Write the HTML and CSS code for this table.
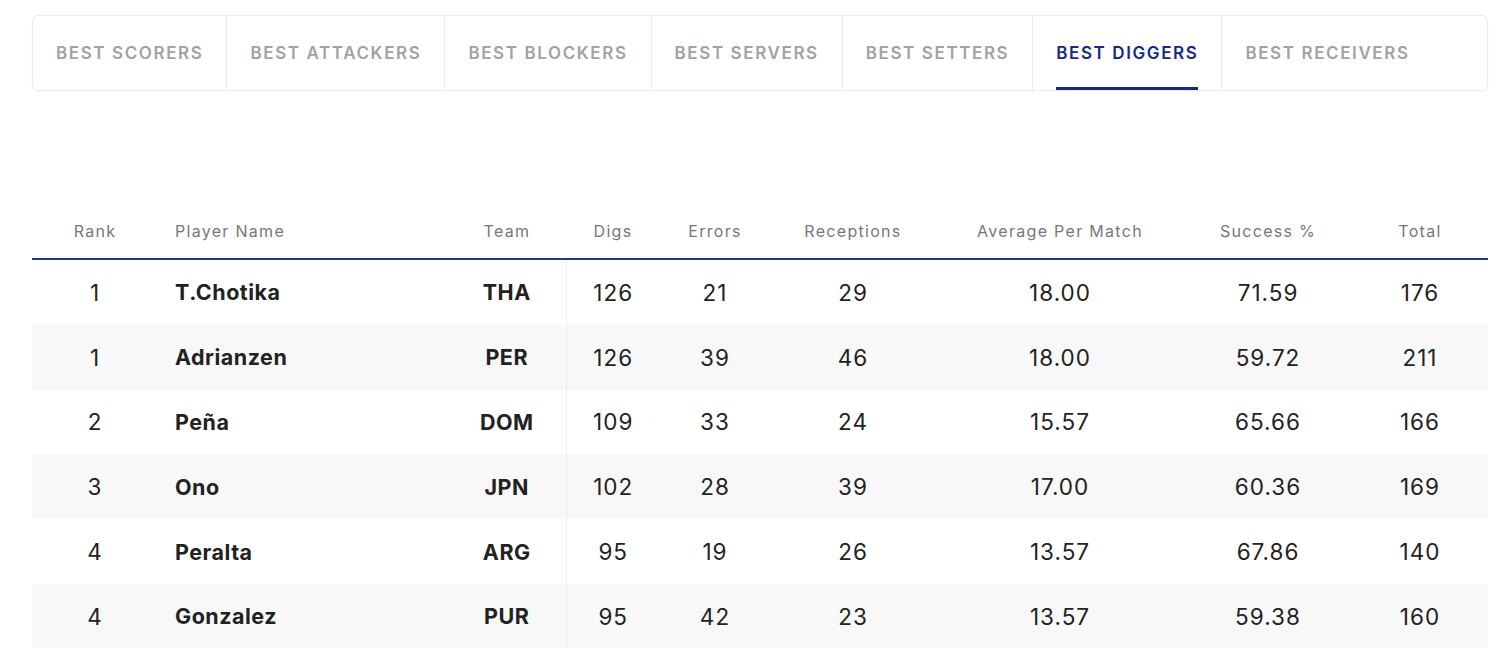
FILE: index.html
```html
<!DOCTYPE html>
<html lang="en">
<head>
<meta charset="utf-8">
<title>Best Diggers</title>
<link rel="stylesheet" href="styles.css">
</head>
<body>
<div class="page">
  <nav class="tabs">
    <div class="tab"><span class="tab-label">BEST SCORERS</span></div>
    <div class="tab"><span class="tab-label">BEST ATTACKERS</span></div>
    <div class="tab"><span class="tab-label">BEST BLOCKERS</span></div>
    <div class="tab"><span class="tab-label">BEST SERVERS</span></div>
    <div class="tab"><span class="tab-label">BEST SETTERS</span></div>
    <div class="tab active"><span class="tab-label">BEST DIGGERS</span></div>
    <div class="tab last"><span class="tab-label">BEST RECEIVERS</span></div>
  </nav>

  <table class="stats">
    <colgroup>
      <col class="c-rank"><col class="c-name"><col class="c-team"><col class="c-digs"><col class="c-err"><col class="c-rec"><col class="c-avg"><col class="c-succ"><col class="c-total">
    </colgroup>
    <thead>
      <tr>
        <th>Rank</th>
        <th class="name">Player Name</th>
        <th>Team</th>
        <th>Digs</th>
        <th>Errors</th>
        <th>Receptions</th>
        <th>Average Per Match</th>
        <th>Success %</th>
        <th>Total</th>
      </tr>
    </thead>
    <tbody>
      <tr><td>1</td><td class="name">T.Chotika</td><td class="team">THA</td><td>126</td><td>21</td><td>29</td><td>18.00</td><td>71.59</td><td>176</td></tr>
      <tr><td>1</td><td class="name">Adrianzen</td><td class="team">PER</td><td>126</td><td>39</td><td>46</td><td>18.00</td><td>59.72</td><td>211</td></tr>
      <tr><td>2</td><td class="name">Peña</td><td class="team">DOM</td><td>109</td><td>33</td><td>24</td><td>15.57</td><td>65.66</td><td>166</td></tr>
      <tr><td>3</td><td class="name">Ono</td><td class="team">JPN</td><td>102</td><td>28</td><td>39</td><td>17.00</td><td>60.36</td><td>169</td></tr>
      <tr><td>4</td><td class="name">Peralta</td><td class="team">ARG</td><td>95</td><td>19</td><td>26</td><td>13.57</td><td>67.86</td><td>140</td></tr>
      <tr><td>4</td><td class="name">Gonzalez</td><td class="team">PUR</td><td>95</td><td>42</td><td>23</td><td>13.57</td><td>59.38</td><td>160</td></tr>
    </tbody>
  </table>
</div>
</body>
</html>
```

FILE: styles.css
```css
html, body {
  margin: 0;
  padding: 0;
  background: #ffffff;
}

body {
  font-family: Inter, "Noto Sans", "Liberation Sans", sans-serif;
  color: #222222;
  overflow: hidden;
}

.page {
  width: 1456px;
  margin-left: 32px;
  padding-top: 15px;
}

.tabs {
  display: flex;
  height: 76px;
  border: 1px solid #ececec;
  border-radius: 6px;
  box-sizing: border-box;
  box-shadow: 0 1px 3px rgba(0, 0, 0, 0.03);
}

.tab {
  display: flex;
  align-items: stretch;
  justify-content: center;
  padding: 0 23px;
  border-right: 1px solid #ececec;
}

.tab.last {
  border-right: none;
}

.tab-label {
  display: flex;
  align-items: center;
  font-size: 17px;
  font-weight: 600;
  letter-spacing: 1.6px;
  color: #a2a2a2;
  border-bottom: 3px solid transparent;
  padding-top: 3px;
  white-space: nowrap;
}

.tab.active .tab-label {
  color: #14298a;
  border-bottom-color: #14298a;
}

.stats {
  margin-top: 112px;
  width: 1456px;
  border-collapse: collapse;
  table-layout: fixed;
}

.c-rank { width: 126px; }
.c-name { width: 290px; }
.c-team { width: 118px; }
.c-digs { width: 94px; }
.c-err { width: 110px; }
.c-rec { width: 166px; }
.c-avg { width: 248px; }
.c-succ { width: 168px; }
.c-total { width: 136px; }

.stats th {
  height: 55px;
  font-size: 16px;
  font-weight: 400;
  letter-spacing: 1.3px;
  color: #777777;
  text-align: center;
  border-bottom: 2px solid #24368f;
  padding: 0;
  vertical-align: middle;
}

.stats th.name,
.stats td.name {
  text-align: left;
  padding-left: 17px;
}

.stats td {
  height: 64.8px;
  padding: 0;
  text-align: center;
  font-size: 22.5px;
  font-weight: 400;
  letter-spacing: 1px;
  color: #222222;
}

.stats td.name,
.stats td.team {
  font-weight: 700;
  font-size: 21.5px;
  letter-spacing: 0.5px;
}

.stats td.team {
  border-right: 1px solid #ececec;
}

.stats tbody tr:nth-child(even) td {
  background: #f8f8f8;
}
```
